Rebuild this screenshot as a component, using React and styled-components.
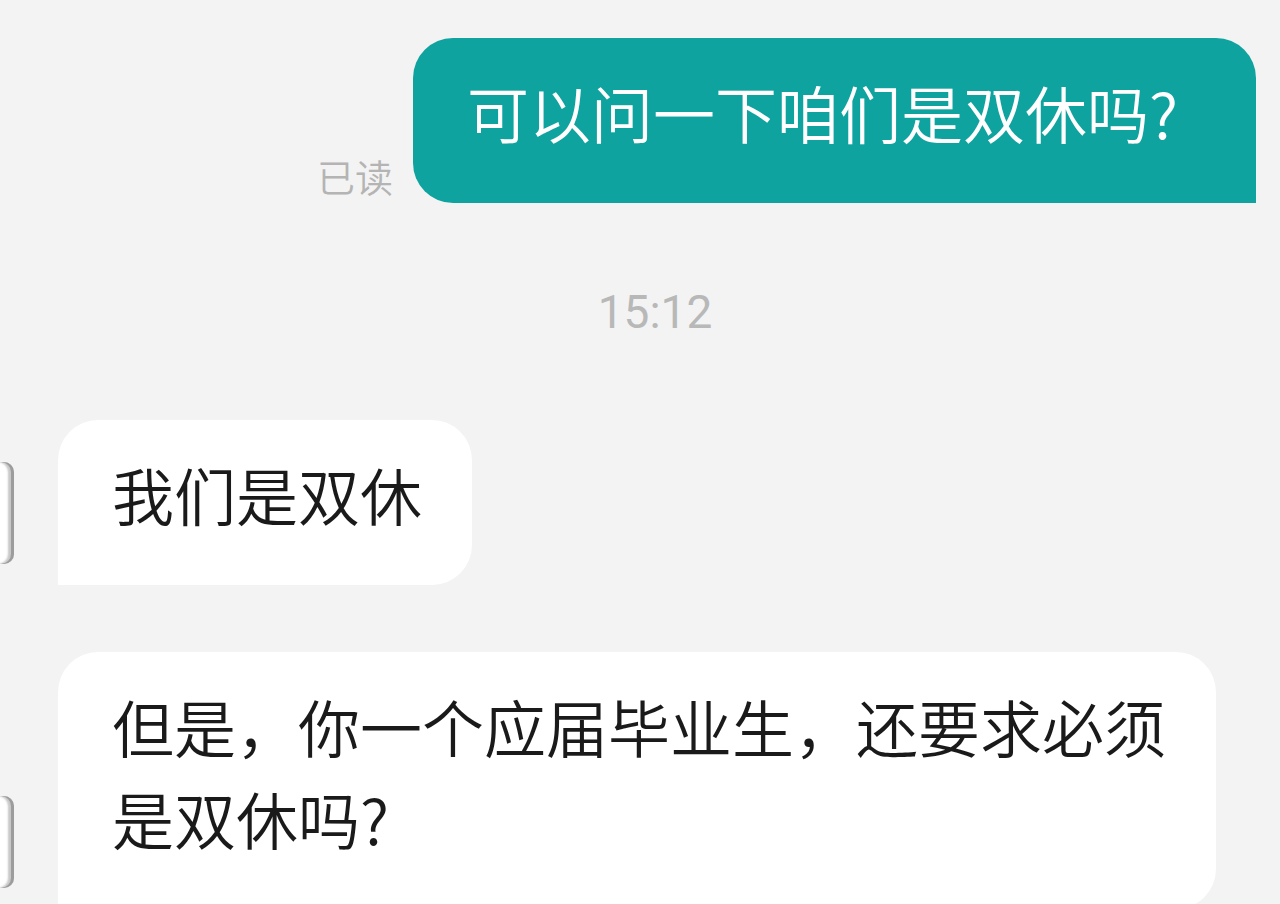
import React from "react";
import styled, { createGlobalStyle } from "styled-components";

const Global = createGlobalStyle`
  html, body { margin: 0; padding: 0; background: #f3f3f3; }
  body { font-family: "Noto Sans CJK SC", "Noto Sans", sans-serif; }
`;

const Page = styled.div`
  width: 1280px;
  height: 904px;
  overflow: hidden;
  background: #f3f3f3;
  padding-top: 38px;
  box-sizing: border-box;
  display: flex;
  flex-direction: column;
`;

const OutRow = styled.div`
  display: flex;
  justify-content: flex-end;
  align-items: flex-end;
  padding-right: 24px;
`;

const ReadMark = styled.span`
  font-size: 38px;
  line-height: 38px;
  font-weight: 350;
  color: #b4b4b4;
  margin-right: 20px;
  margin-bottom: 8px;
`;

const Bubble = styled.div`
  box-sizing: border-box;
  font-family: "Noto Sans CJK SC", sans-serif;
  font-size: 62px;
  font-weight: 350;
  line-height: 92px;
  padding: 28px ${(p) => p.$padRight}px 45px 54px;
  background: ${(p) => (p.$mine ? "#0fa3a0" : "#ffffff")};
  color: ${(p) => (p.$mine ? "#ffffff" : "#1a1a1a")};
  border-radius: ${(p) => (p.$mine ? "40px 40px 0 40px" : "40px 40px 40px 0")};
  white-space: nowrap;
`;

const TimeStamp = styled.div`
  font-family: Roboto, "Liberation Sans", sans-serif;
  font-size: 46px;
  line-height: 46px;
  color: #b8b8b8;
  text-align: center;
  padding-left: 30px;
  margin: 86px 0 85px;
`;

const InRow = styled.div`
  display: flex;
  align-items: flex-start;
  gap: 44px;
  margin-bottom: ${(p) => p.$gap}px;
`;

const Avatar = styled.div`
  flex: none;
  width: 100px;
  height: ${(p) => p.$h}px;
  margin-left: -86px;
  margin-top: ${(p) => p.$top}px;
  background: #ffffff;
  border-radius: 10px;
  box-shadow: inset -3px 0 0 #9c9c9c, inset -6px 0 2px #c8c8c8;
`;

export default function App() {
  return (
    <>
      <Global />
      <Page>
        <OutRow>
          <ReadMark>已读</ReadMark>
          <Bubble $mine $padRight={78}>可以问一下咱们是双休吗?</Bubble>
        </OutRow>
        <TimeStamp>15:12</TimeStamp>
        <InRow $gap={67}>
          <Avatar $h={102} $top={42} />
          <Bubble $padRight={50}>我们是双休</Bubble>
        </InRow>
        <InRow $gap={0}>
          <Avatar $h={92} $top={144} />
          <Bubble $padRight={50}>
            但是，你一个应届毕业生，还要求必须
            <br />
            是双休吗?
          </Bubble>
        </InRow>
      </Page>
    </>
  );
}
